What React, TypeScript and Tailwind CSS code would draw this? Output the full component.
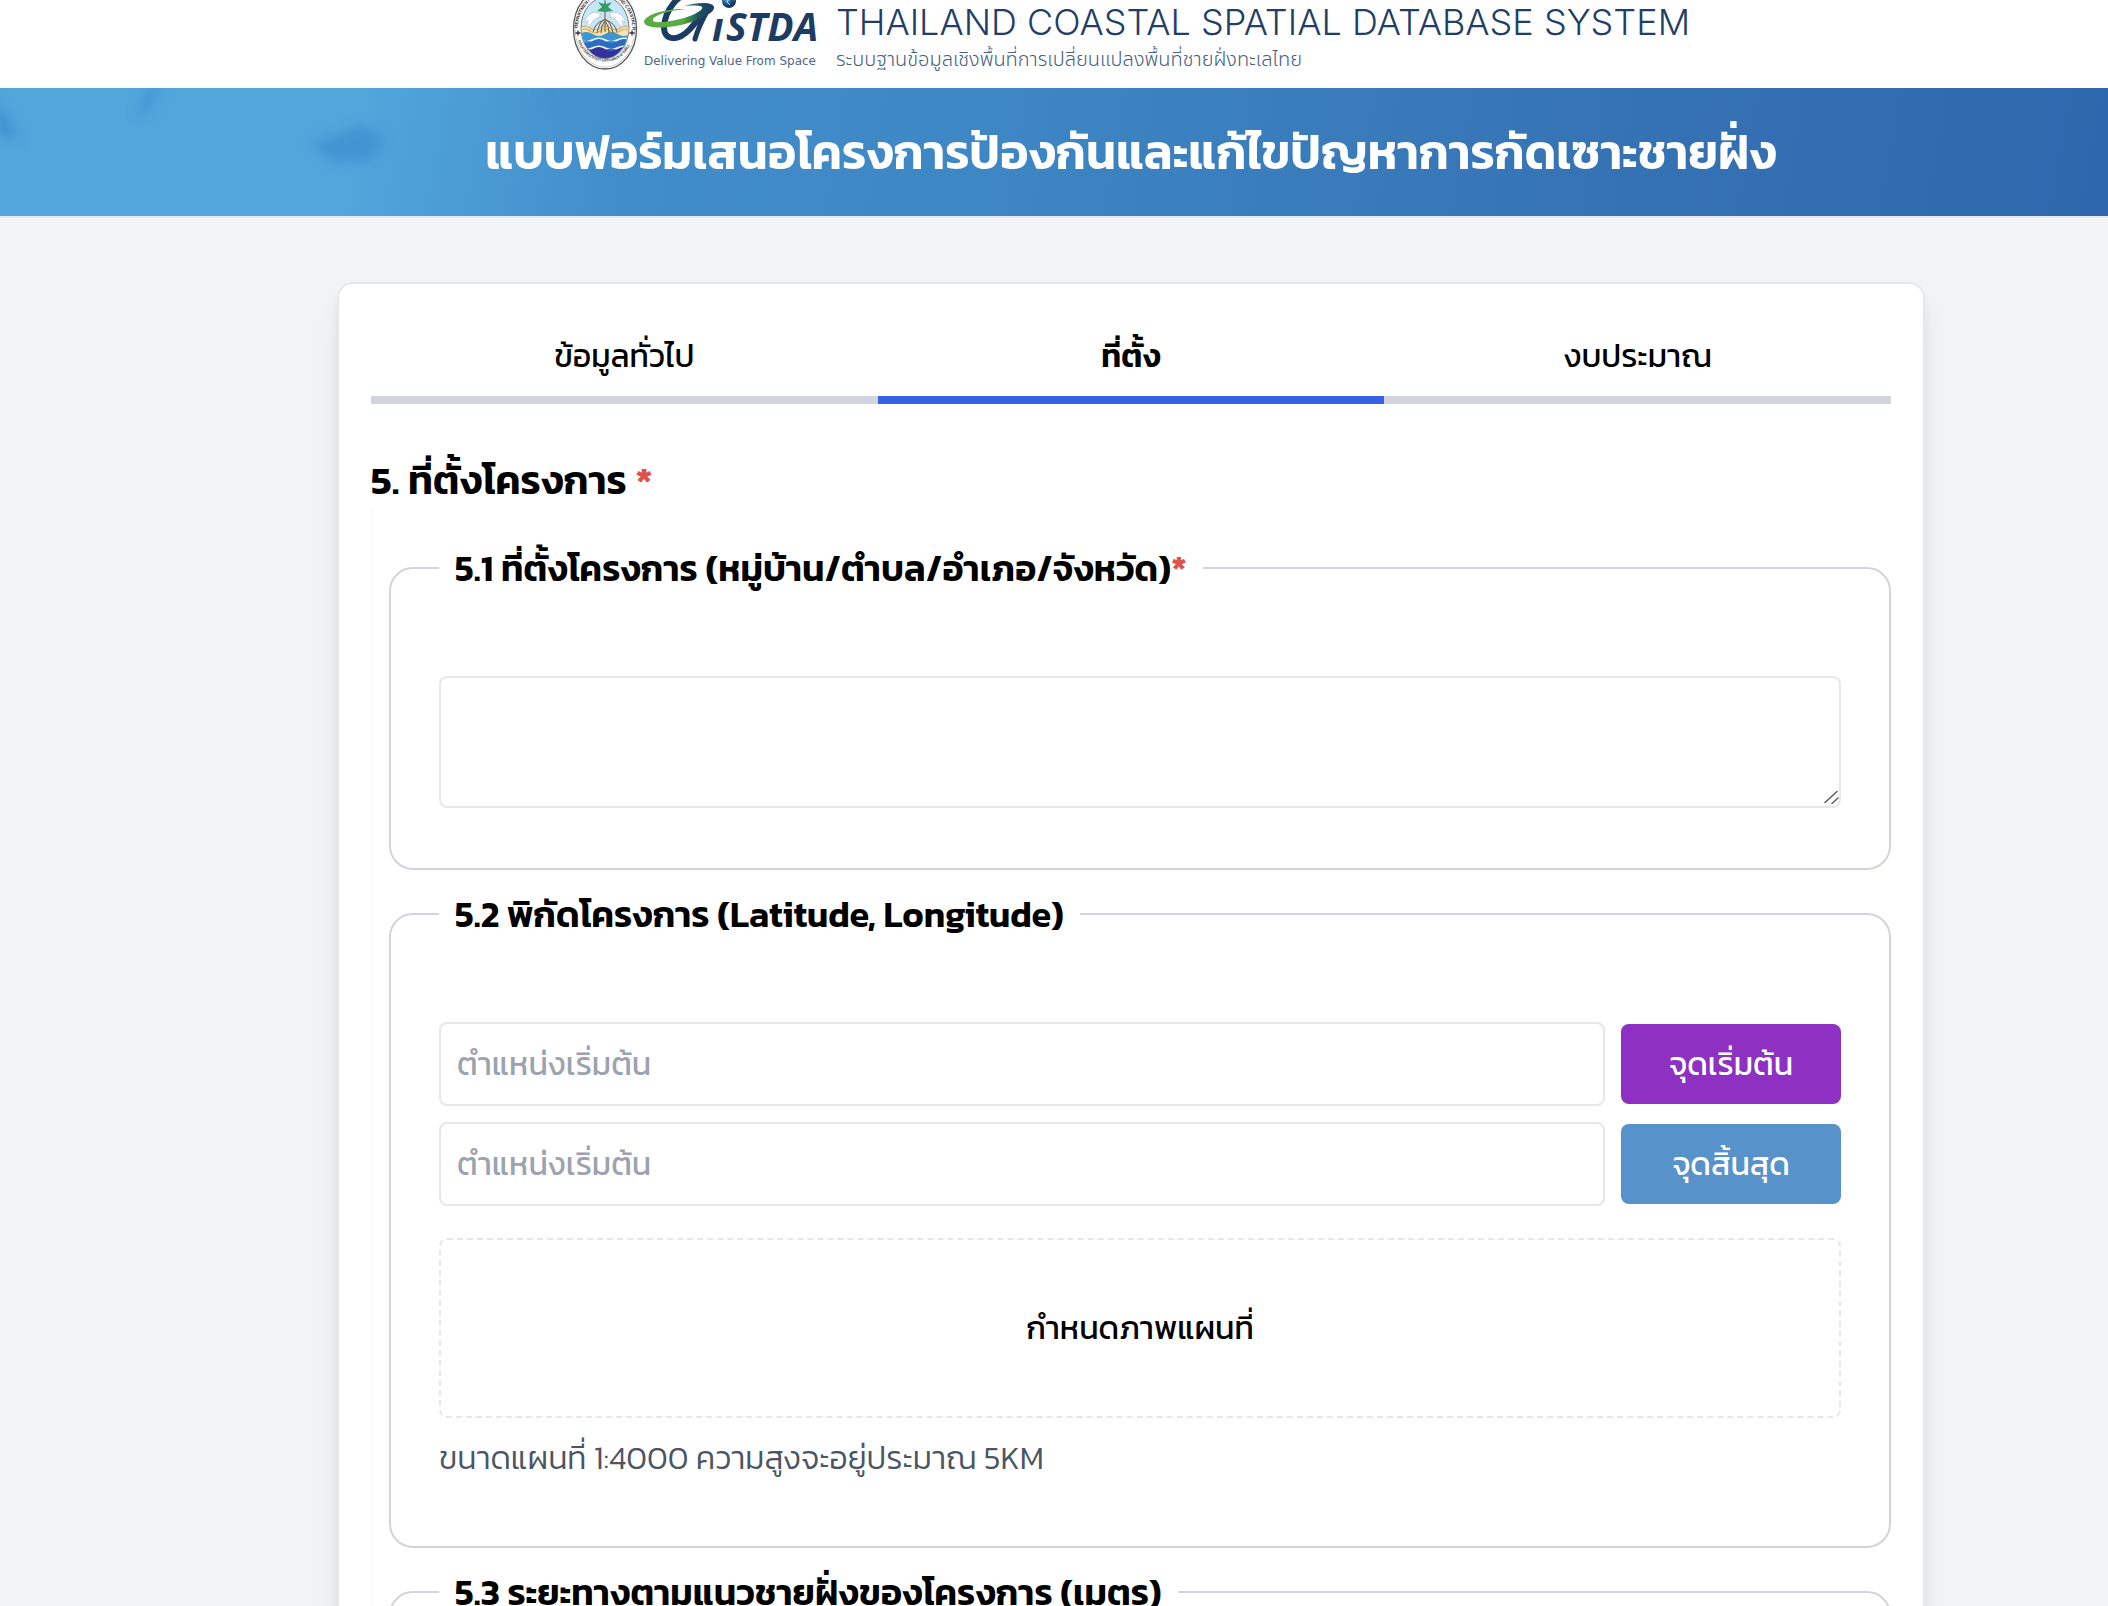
import type { ReactNode } from "react";

const TABS = [
  { label: "ข้อมูลทั่วไป", active: false },
  { label: "ที่ตั้ง", active: true },
  { label: "งบประมาณ", active: false },
];

const POINTS = [
  { id: "start", button: "จุดเริ่มต้น", color: "bg-[#8e30c2]" },
  { id: "end", button: "จุดสิ้นสุด", color: "bg-[#5792ca]" },
];

function DepartmentSeal() {
  return (
    <svg viewBox="0 0 66 82" className="h-[82px] w-[66px] shrink-0" aria-hidden="true">
      <defs>
        <clipPath id="seal-clip">
          <ellipse cx="33" cy="40" rx="23.5" ry="30" />
        </clipPath>
        <path id="seal-upper" d="M5.5 43 A27.5 35.5 0 0 1 60.5 43" />
        <path id="seal-lower" d="M3.8 46 A30 36 0 0 0 62.2 46" />
      </defs>
      <ellipse cx="33" cy="41" rx="31.5" ry="40" fill="#fff" stroke="#55585c" strokeWidth="1.3" />
      <ellipse cx="33" cy="41" rx="29.8" ry="38.2" fill="none" stroke="#b4b6b9" strokeWidth="0.7" />
      <ellipse cx="33" cy="40" rx="24" ry="30.5" fill="#c7e6f7" stroke="#65696e" strokeWidth="0.9" />
      <g clipPath="url(#seal-clip)">
        <path d="M8 41q5-4 10 0t10 0 10 0 10 0 10 0v8H8z" fill="#f5e3b9" />
        <path d="M8 40q5-4 10 0t10 0 10 0 10 0 10 0M8 43q5-4 10 0t10 0 10 0 10 0 10 0" fill="none" stroke="#dfa945" strokeWidth="1.1" />
        <path d="M8 46q6-4 12.500 0t12.500 0 12.500 0 12.500 0v35H8z" fill="#3b97d3" />
        <path d="M8 51q6 3 12.500 0t12.500 0 12.500 0 12.500 0v3q-6 3-12.500 0t-12.500 0-12.500 0-12.500 0z" fill="#e9f5fc" />
        <path d="M8 53q6 4 12.500 0t12.500 0 12.500 0 12.500 0v27H8z" fill="#2c6cc0" />
        <path d="M8 59q6 3 12.500 0t12.500 0 12.500 0 12.500 0v3q-6 3-12.500 0t-12.500 0-12.500 0-12.500 0z" fill="#f2f8fd" />
        <path d="M8 61q6 4 12.500 0t12.500 0 12.500 0 12.500 0v20H8z" fill="#35309b" />
      </g>
      <path d="M33 22v22M33 31q-6 3-8 14M33 31q6 3 8 14M33 33q-4 4-4 12M33 33q4 4 4 12M32 32q-9 3-11 12M34 32q9 3 11 12" fill="none" stroke="#75552f" strokeWidth="1" />
      <path d="M33 24l-8-1 5-4-4-5 6 2 1-7 1 7 6-2-4 5 5 4z" fill="#379b67" />
      <path d="M29 26q-6-4-12 1-4 3-4 8l3-3q0 4-2 7 5-1 6-5 4-5 9-5l-2-1z" fill="#fff" stroke="#9eb6c6" strokeWidth="0.5" />
      <path d="M37 26q6-4 12 1 4 3 4 8l-3-3q0 4 2 7-5-1-6-5-4-5-9-5l2-1z" fill="#fff" stroke="#9eb6c6" strokeWidth="0.5" />
      <path d="M3.500 45h5M6 42.500v5M57.500 45h5M60 42.500v5" stroke="#333" strokeWidth="1.3" />
      <text fontFamily="Liberation Sans" fontSize="4.500" fontWeight="700" fill="#333">
        <textPath href="#seal-upper" startOffset="3">DEPARTMENT OF MARINE AND COASTAL RESOURCES</textPath>
      </text>
      <text fontFamily="Kanit, Noto Sans" fontSize="5" fill="#333">
        <textPath href="#seal-lower" startOffset="7">กรมทรัพยากรทางทะเลและชายฝั่ง</textPath>
      </text>
    </svg>
  );
}

function GistdaLogo() {
  return (
    <svg viewBox="0 0 182 82" className="h-[82px] w-[182px] shrink-0" role="img" aria-label="GISTDA Delivering Value From Space">
      <defs>
        <linearGradient id="swoosh" x1="0" x2="1">
          <stop offset="0.550" stopColor="#5aab42" />
          <stop offset="0.780" stopColor="#1d5263" />
          <stop offset="1" stopColor="#1c3c64" />
        </linearGradient>
        <radialGradient id="globe" cx="0.350" cy="0.350">
          <stop offset="0" stopColor="#8cc9ee" />
          <stop offset="0.500" stopColor="#2b73b4" />
          <stop offset="1" stopColor="#17375f" />
        </radialGradient>
      </defs>
      <path d="M54 4 C40 6 27 22 26 39 C26 54 41 53 52 41 C59 33 64 27 69 21" fill="none" stroke="#1c3c64" strokeWidth="6" />
      <path d="M71 20 Q61 37 57 51" fill="none" stroke="#1c3c64" strokeWidth="5" strokeLinecap="round" />
      <path d="M48 21 C28 20 6 27 6 34 C7 42 36 41 56 33 C68 28 77 24 76 19 C74 13 58 15 46 18 C58 17 68 17 63 22 C54 30 28 35 17 34 C9 30 26 23 48 21Z" fill="url(#swoosh)" />
      <circle cx="91" cy="13" r="7" fill="url(#globe)" />
      <path d="M86 9l5 2-2 3 3 3M92 7l1 4 4 1" stroke="#b9e0f5" strokeWidth="1" fill="none" />
      <g fontFamily="Open Sans, Noto Sans" fontStyle="italic" fontWeight="700" fill="#1c3c64">
        <text x="74" y="53" fontSize="39">ı</text>
        <text x="88" y="53" fontSize="39">STDA</text>
      </g>
      <text x="6" y="77" fontFamily="DejaVu Sans" fontSize="12" fill="#4f6684">
        Delivering Value From Space
      </text>
    </svg>
  );
}

function Required() {
  return <span className="text-[#de524c]">*</span>;
}

function Section({ title, children }: { title: ReactNode; children: ReactNode }) {
  return (
    <fieldset className="rounded-3xl border-2 border-[#d1d5db] px-12 pb-12">
      <legend className="px-4 text-[36px] leading-[56px] font-semibold">{title}</legend>
      <div className="pt-20">{children}</div>
    </fieldset>
  );
}

export default function App() {
  return (
    <div className="h-screen overflow-hidden bg-[#f2f3f5] font-['Kanit','Noto_Sans',sans-serif] text-[32px] leading-[48px] text-black">
      <header className="flex h-[88px] items-end justify-center bg-white pl-[154px]">
        <div className="flex items-end">
          <div className="flex pb-[18px]">
            <DepartmentSeal />
            <GistdaLogo />
          </div>
          <div className="flex flex-col pb-[14px] pl-4">
            <p className="font-['Inter',sans-serif] text-[36px] leading-[48px] font-light whitespace-nowrap text-[#1f3f66]">
              THAILAND COASTAL SPATIAL DATABASE SYSTEM
            </p>
            <p className="font-['Noto_Sans_Thai','Noto_Sans',sans-serif] text-[20px] leading-[28px] font-light text-[#46607f]">
              ระบบฐานข้อมูลเชิงพื้นที่การเปลี่ยนแปลงพื้นที่ชายฝั่งทะเลไทย
            </p>
          </div>
        </div>
      </header>

      <div className="relative border-b-2 border-[#e5e7eb] bg-[linear-gradient(100deg,#52a6dc_0%,#52a6dc_17%,#418dca_30%,#3e87c5_46%,#3674b5_74%,#2e67ad_100%)]">
        <svg className="absolute inset-y-0 left-0 h-full w-[600px]" viewBox="0 0 600 128" aria-hidden="true">
          <defs>
            <filter id="soft" x="-50%" y="-50%" width="200%" height="200%">
              <feGaussianBlur stdDeviation="6" />
            </filter>
          </defs>
          <g fill="#3785ca" filter="url(#soft)">
            <path d="M-8 12l16 18 12 20-22-4z" opacity="0.700" />
            <path d="M146 0h16l-14 24-12 6z" opacity="0.500" />
            <path d="M310 54l30-8 20-10 26 16-14 20-38 3z" opacity="0.550" />
            <path d="M540 0h14l8 22-12-6z" opacity="0.300" />
          </g>
        </svg>
        <h1 className="relative py-8 pl-[154px] text-center text-[48px] leading-[64px] font-semibold text-white">
          แบบฟอร์มเสนอโครงการป้องกันและแก้ไขปัญหาการกัดเซาะชายฝั่ง
        </h1>
      </div>

      <main className="pt-16 pr-[183px] pl-[337px]">
        <div className="rounded-2xl border-2 border-[#e5e7eb] bg-white p-8 shadow-[0_20px_30px_-6px_rgba(0,0,0,0.1),0_8px_12px_-4px_rgba(0,0,0,0.1)]">
          <nav className="grid grid-cols-3">
            {TABS.map((tab) => (
              <button
                key={tab.label}
                type="button"
                className={
                  tab.active
                    ? "border-b-8 border-[#3662e3] py-4 font-semibold"
                    : "border-b-8 border-[#d1d5db] py-4"
                }
              >
                {tab.label}
              </button>
            ))}
          </nav>

          <h2 className="mt-12 text-[40px] leading-[56px] font-semibold">
            5. ที่ตั้งโครงการ <Required />
          </h2>

          <div className="flex flex-col gap-4 border-l-2 border-[#f9fafb] pt-8 pl-4">
            <Section
              title={
                <>
                  5.1 ที่ตั้งโครงการ (หมู่บ้าน/ตำบล/อำเภอ/จังหวัด)
                  <Required />
                </>
              }
            >
              <div className="relative mb-3">
                <textarea
                  aria-label="ที่ตั้งโครงการ"
                  className="block h-[132px] w-full resize-y rounded-lg border-2 border-[#e5e7eb] p-4"
                />
                <svg
                  className="pointer-events-none absolute right-0.5 bottom-0.5 size-[18px] rounded-br-md bg-white"
                  viewBox="0 0 18 18"
                  fill="none"
                  stroke="#5f5f5f"
                  strokeWidth="1.6"
                  strokeLinecap="round"
                  aria-hidden="true"
                >
                  <path d="M4 14.500L16 3.500M11 15.500L17 10" />
                </svg>
              </div>
            </Section>

            <Section title="5.2 พิกัดโครงการ (Latitude, Longitude)">
              <div className="flex flex-col gap-4">
                {POINTS.map((point) => (
                  <div key={point.id} className="flex items-center gap-4">
                    <input
                      type="text"
                      aria-label={point.button}
                      placeholder="ตำแหน่งเริ่มต้น"
                      className="h-[84px] min-w-0 flex-1 rounded-lg border-2 border-[#e5e7eb] px-4 placeholder:text-[#9ca3af]"
                    />
                    <button type="button" className={`h-20 w-[220px] rounded-lg text-white ${point.color}`}>
                      {point.button}
                    </button>
                  </div>
                ))}
              </div>
              <button
                type="button"
                className="mt-8 block h-[180px] w-full rounded-lg border-2 border-dashed border-[#e5e7eb]"
              >
                กำหนดภาพแผนที่
              </button>
              <p className="py-4 font-light text-[#4b5563]">ขนาดแผนที่ 1:4000 ความสูงจะอยู่ประมาณ 5KM</p>
            </Section>

            <Section title="5.3 ระยะทางตามแนวชายฝั่งของโครงการ (เมตร)">
              <input
                type="text"
                aria-label="ระยะทางตามแนวชายฝั่งของโครงการ"
                className="h-[84px] w-full rounded-lg border-2 border-[#e5e7eb] px-4"
              />
            </Section>
          </div>
        </div>
      </main>
    </div>
  );
}
